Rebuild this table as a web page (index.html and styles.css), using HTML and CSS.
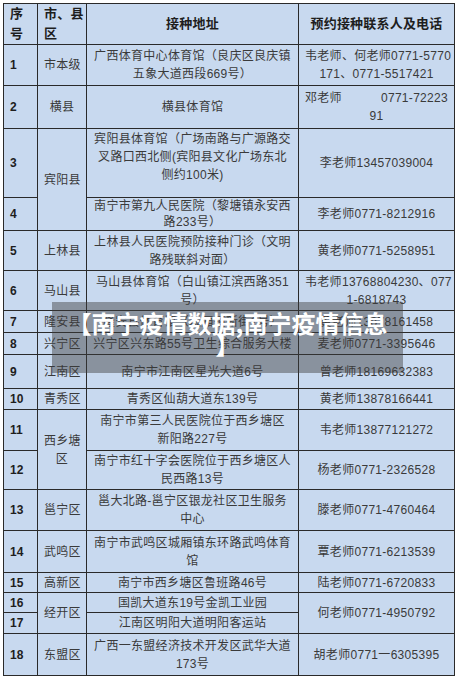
FILE: index.html
```html
<!DOCTYPE html>
<html lang="zh-CN">
<head>
<meta charset="utf-8">
<title>南宁疫苗接种点</title>
<link rel="stylesheet" href="styles.css">
</head>
<body>
<div class="page">
  <table class="sheet">
    <colgroup>
      <col class="c-no">
      <col class="c-area">
      <col class="c-addr">
      <col class="c-tel">
    </colgroup>
    <thead>
      <tr class="h39">
        <th class="no">序<br>号</th>
        <th class="area-h">市、县<br>区</th>
        <th>接种地址</th>
        <th>预约接种联系人及电话</th>
      </tr>
    </thead>
    <tbody>
      <tr class="h41">
        <td class="no">1</td>
        <td>市本级</td>
        <td>广西体育中心体育馆（良庆区良庆镇<br>五象大道西段669号）</td>
        <td>韦老师、何老师0771-5770<br>171、0771-5517421</td>
      </tr>
      <tr class="h43">
        <td class="no">2</td>
        <td>横县</td>
        <td>横县体育馆</td>
        <td><span class="spread"><span>邓老师</span><span>0771-72223</span></span>91</td>
      </tr>
      <tr class="h69">
        <td class="no">3</td>
        <td rowspan="2">宾阳县</td>
        <td class="top">宾阳县体育馆（广场南路与广源路交<br>叉路口西北侧(宾阳县文化广场东北<br>侧约100米)</td>
        <td>李老师13457039004</td>
      </tr>
      <tr class="h33 tight">
        <td class="no">4</td>
        <td>南宁市第九人民医院（黎塘镇永安西<br>路233号）</td>
        <td>李老师0771-8212916</td>
      </tr>
      <tr class="h40">
        <td class="no">5</td>
        <td>上林县</td>
        <td>上林县人民医院预防接种门诊（文明<br>路残联斜对面）</td>
        <td>黄老师0771-5258951</td>
      </tr>
      <tr class="h40">
        <td class="no">6</td>
        <td>马山县</td>
        <td>马山县体育馆（白山镇江滨西路351<br>号）</td>
        <td><span class="spread"><span>韦老师</span><span>13768804230、077</span></span>1-6818743</td>
      </tr>
      <tr class="h22">
        <td class="no">7</td>
        <td>隆安县</td>
        <td>隆安县体育馆（城厢镇新街1号）</td>
        <td>黄老师13878161458</td>
      </tr>
      <tr class="h22">
        <td class="no">8</td>
        <td>兴宁区</td>
        <td>兴宁区兴东路55号卫生综合服务大楼</td>
        <td>麦老师0771-3395646</td>
      </tr>
      <tr class="h34">
        <td class="no">9</td>
        <td>江南区</td>
        <td>南宁市江南区星光大道6号</td>
        <td>曾老师18169632383</td>
      </tr>
      <tr class="h21">
        <td class="no">10</td>
        <td>青秀区</td>
        <td>青秀区仙葫大道东139号</td>
        <td>黄老师13878166441</td>
      </tr>
      <tr class="h41">
        <td class="no">11</td>
        <td rowspan="2">西乡塘<br>区</td>
        <td>南宁市第三人民医院位于西乡塘区<br>新阳路227号</td>
        <td>韦老师13877121272</td>
      </tr>
      <tr class="h39">
        <td class="no">12</td>
        <td>南宁市红十字会医院位于西乡塘区人<br>民西路13号</td>
        <td>杨老师0771-2326528</td>
      </tr>
      <tr class="h41">
        <td class="no">13</td>
        <td>邕宁区</td>
        <td>邕大北路-邕宁区银龙社区卫生服务<br>中心</td>
        <td>滕老师0771-4760464</td>
      </tr>
      <tr class="h42">
        <td class="no">14</td>
        <td>武鸣区</td>
        <td>南宁市武鸣区城厢镇东环路武鸣体育<br>馆</td>
        <td>覃老师0771-6213539</td>
      </tr>
      <tr class="h20">
        <td class="no">15</td>
        <td>高新区</td>
        <td>南宁市西乡塘区鲁班路46号</td>
        <td>陆老师0771-6720833</td>
      </tr>
      <tr class="h20">
        <td class="no">16</td>
        <td rowspan="2">经开区</td>
        <td>国凯大道东19号金凯工业园</td>
        <td rowspan="2">何老师0771-4950792</td>
      </tr>
      <tr class="h21">
        <td class="no">17</td>
        <td>江南区明阳大道明阳客运站</td>
      </tr>
      <tr class="h42">
        <td class="no">18</td>
        <td>东盟区</td>
        <td>广西一东盟经济技术开发区武华大道<br>173号</td>
        <td>胡老师0771一6305395</td>
      </tr>
    </tbody>
  </table>
  <div class="caption">【南宁疫情数据,南宁疫情信息<br>】</div>
</div>
</body>
</html>
```

FILE: styles.css
```css
html, body {
  margin: 0;
  padding: 0;
  background: #ffffff;
}

.page {
  position: relative;
  width: 456px;
  box-sizing: border-box;
  padding: 3px 2px 3px 3px;
}

.sheet {
  table-layout: fixed;
  border-collapse: collapse;
  width: 451px;
  background: #c8d9ef;
  font-family: "Liberation Sans", "Noto Sans CJK SC", sans-serif;
  font-size: 12px;
  letter-spacing: 0.3px;
  line-height: 18px;
  color: #3a3a3a;
}

.c-no { width: 34px; }
.c-area { width: 49px; }
.c-addr { width: 212px; }
.c-tel { width: 156px; }

.sheet th,
.sheet td {
  border: 1px solid #2a2a2a;
  padding: 0 6px;
  text-align: center;
  vertical-align: middle;
  white-space: nowrap;
  overflow: hidden;
}

.sheet th {
  font-size: 13px;
  font-weight: bold;
  color: #1e1e1e;
  line-height: 20px;
  letter-spacing: 0.2px;
}

.sheet th.area-h {
  text-align: left;
}

.sheet .no {
  text-align: left;
  font-weight: bold;
  color: #1e1e1e;
  letter-spacing: 0;
}

.sheet th.no {
  font-size: 13px;
}

.sheet td.top {
  vertical-align: top;
  padding-top: 1px;
}

.tight td {
  line-height: 16px;
}

.spread {
  display: flex;
  justify-content: space-between;
}

.h20 { height: 20px; }
.h21 { height: 21px; }
.h22 { height: 22px; }
.h33 { height: 33px; }
.h34 { height: 34px; }
.h39 { height: 39px; }
.h40 { height: 40px; }
.h41 { height: 41px; }
.h42 { height: 42px; }
.h43 { height: 43px; }
.h69 { height: 69px; }

.caption {
  position: absolute;
  left: 52px;
  top: 302px;
  width: 351px;
  height: 71px;
  box-sizing: border-box;
  padding-top: 10px;
  background: rgba(60, 60, 60, 0.45);
  color: #ffffff;
  font-family: "Noto Sans CJK SC", "Liberation Sans", sans-serif;
  font-size: 24px;
  font-weight: bold;
  line-height: 21px;
  text-align: center;
  white-space: nowrap;
}
```
